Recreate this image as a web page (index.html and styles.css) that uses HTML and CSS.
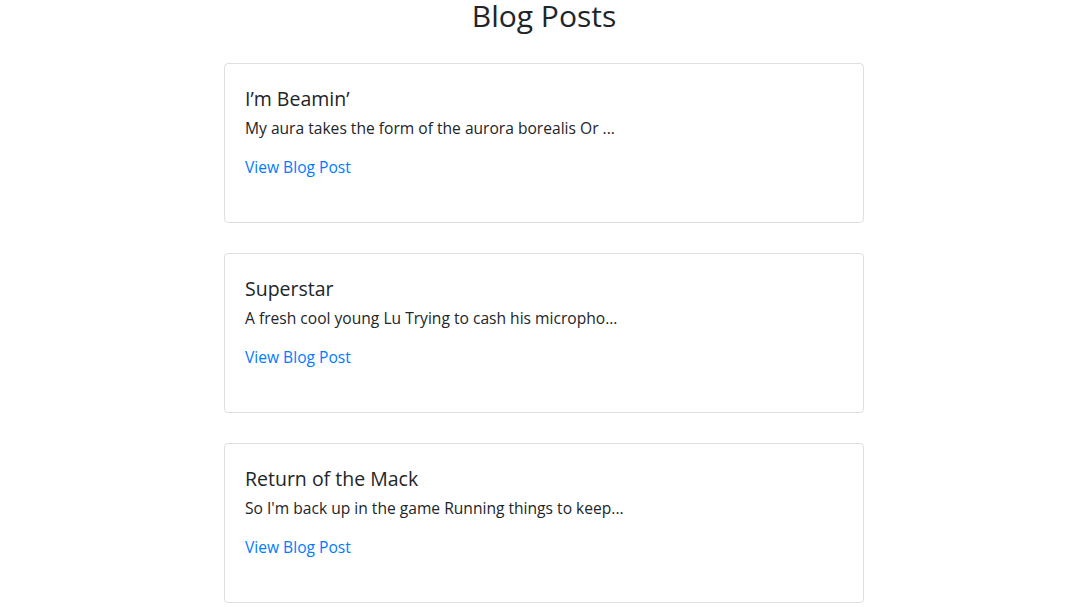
FILE: index.html
```html
<!DOCTYPE html>
<html lang="en">
<head>
<meta charset="utf-8">
<title>Blog Posts</title>
<link rel="stylesheet" href="styles.css">
</head>
<body>
<main class="page">
  <h1 class="page-title">Blog Posts</h1>
  <section class="posts">
    <article class="card">
      <h5 class="card-title">I’m Beamin’</h5>
      <p class="card-text">My aura takes the form of the aurora borealis Or ...</p>
      <a class="card-link" href="#">View Blog Post</a>
    </article>
    <article class="card">
      <h5 class="card-title">Superstar</h5>
      <p class="card-text">A fresh cool young Lu Trying to cash his micropho...</p>
      <a class="card-link" href="#">View Blog Post</a>
    </article>
    <article class="card">
      <h5 class="card-title">Return of the Mack</h5>
      <p class="card-text">So I'm back up in the game Running things to keep...</p>
      <a class="card-link" href="#">View Blog Post</a>
    </article>
  </section>
</main>
</body>
</html>
```
FILE: styles.css
```css
* { box-sizing: border-box; }
html, body { margin: 0; background: #fff; }
body {
  padding-left: 8px;
  font-family: "Open Sans", "Noto Sans", sans-serif;
  color: #212529;
  font-size: 15.6px;
  line-height: 24px;
}
.page { width: 640px; margin: 0 auto; }
.page-title {
  margin: 0 0 31px;
  font-size: 30px;
  font-weight: 400;
  line-height: 32px;
  text-align: center;
}
.posts { display: flex; flex-direction: column; gap: 30px; }
.card {
  display: flex;
  flex-direction: column;
  align-items: flex-start;
  border: 1px solid rgba(0,0,0,.125);
  border-radius: 4px;
  padding: 23px 20px 20px;
  height: 160px;
}
.card-title {
  margin: 0 0 5px;
  font-size: 19.5px;
  font-weight: 400;
  line-height: 24px;
}
.card-text { margin: 0 0 15px; }
.card-link { color: #007bff; text-decoration: none; }
```
